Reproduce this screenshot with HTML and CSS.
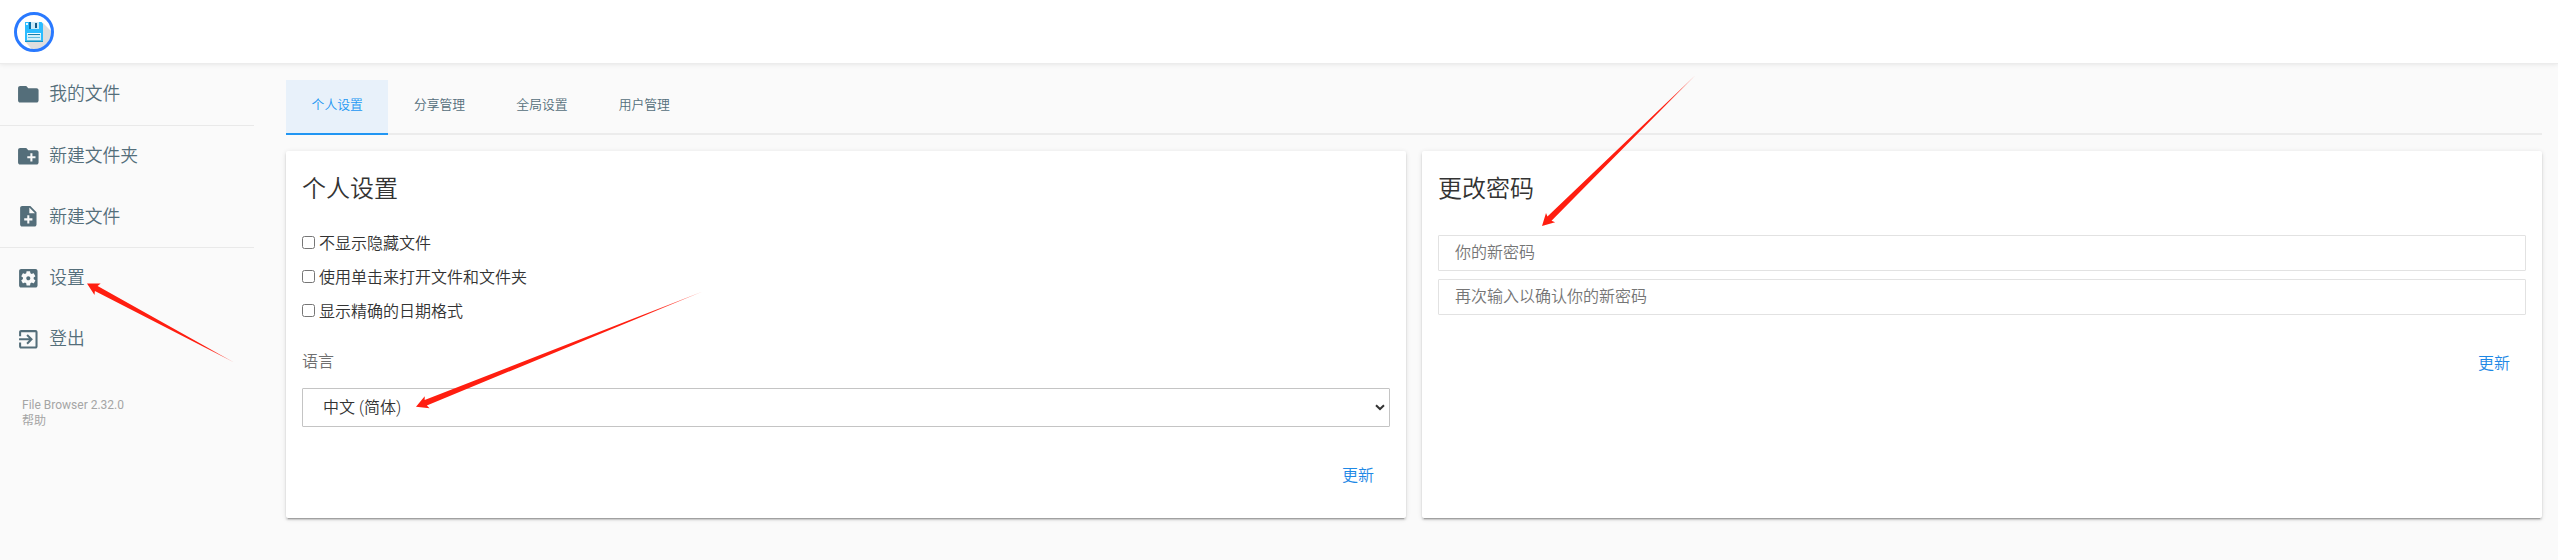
FILE: index.html
```html
<!DOCTYPE html>
<html lang="zh-CN">
<head>
<meta charset="utf-8">
<title>File Browser</title>
<link rel="stylesheet" href="styles.css">
</head>
<body>
<header class="header">
  <svg class="logo" viewBox="0 0 40 40">
    <circle cx="20" cy="20" r="18.5" fill="#fff"/>
    <path d="M29 11l8.500 8.500A18.500 18.500 0 0 1 18 37.500L11.500 30z" fill="#dedede"/>
    <path d="M11 10h16.500l1.500 1.500V30H11z" fill="#2bbcff"/>
    <path d="M12 11h2v2h-2z" fill="#e8f9ff"/>
    <path d="M15 10h10v7H15z" fill="#cbeaf8"/>
    <path d="M15 10h2v7h-2z" fill="#0873ae"/>
    <path d="M21 11h2v5h-2z" fill="#155a86"/>
    <path d="M13 21h14v8H13z" fill="#d3eff9"/>
    <path d="M13 21h14v1H13z" fill="#f3fcff"/>
    <path d="M14 22h12v1H14z" fill="#167fad"/>
    <path d="M14 25h12v1H14zM13 28h14v1H13z" fill="#64bddf"/>
    <path d="M11 29h18v1H11z" fill="#1193c9"/>
    <circle cx="20" cy="20" r="18.500" fill="none" stroke="#2979ff" stroke-width="3"/>
  </svg>
</header>
<div class="layout">
  <nav class="sidebar">
    <div class="group">
      <a class="action"><svg class="icon" viewBox="0 0 24 24"><path d="M10 4H4c-1.100 0-1.990.9-1.990 2L2 18c0 1.100.9 2 2 2h16c1.100 0 2-.9 2-2V8c0-1.100-.9-2-2-2h-8l-2-2z"/></svg><span>我的文件</span></a>
    </div>
    <div class="group">
      <a class="action"><svg class="icon" viewBox="0 0 24 24"><path d="M20 6h-8l-2-2H4c-1.110 0-1.990.89-1.990 2L2 18c0 1.110.89 2 2 2h16c1.110 0 2-.89 2-2V8c0-1.110-.89-2-2-2zm-1 8h-3v3h-2v-3h-3v-2h3V9h2v3h3v2z"/></svg><span>新建文件夹</span></a>
      <a class="action"><svg class="icon" viewBox="0 0 24 24"><path d="M14 2H6c-1.100 0-1.990.9-1.990 2L4 20c0 1.100.89 2 1.990 2H18c1.100 0 2-.9 2-2V8l-6-6zm2 14h-3v3h-2v-3H8v-2h3v-3h2v3h3v2zm-3-7V3.500L18.500 9H13z"/></svg><span>新建文件</span></a>
    </div>
    <div class="group">
      <a class="action"><svg class="icon" viewBox="0 0 24 24"><path d="M12 10c-1.100 0-2 .9-2 2s.9 2 2 2 2-.9 2-2-.9-2-2-2zm7-7H5c-1.110 0-2 .9-2 2v14c0 1.100.89 2 2 2h14c1.110 0 2-.9 2-2V5c0-1.100-.89-2-2-2zm-1.750 9c0 .23-.02.46-.05.68l1.480 1.160c.13.11.17.3.08.45l-1.400 2.420c-.09.15-.27.21-.43.15l-1.740-.7c-.36.28-.76.51-1.180.69l-.26 1.850c-.03.17-.18.3-.35.3h-2.800c-.17 0-.32-.13-.35-.29l-.26-1.850c-.43-.18-.82-.41-1.180-.69l-1.740.7c-.16.06-.34 0-.43-.15l-1.400-2.420c-.09-.15-.05-.34.08-.45l1.480-1.160c-.03-.23-.05-.46-.05-.69 0-.23.02-.46.05-.68l-1.480-1.160c-.13-.11-.17-.3-.08-.45l1.400-2.420c.09-.15.27-.21.43-.15l1.740.7c.36-.28.76-.51 1.180-.69l.26-1.850c.03-.17.18-.3.35-.3h2.800c.17 0 .32.13.35.29l.26 1.850c.43.18.82.41 1.180.69l1.740-.7c.16-.06.34 0 .43.15l1.400 2.420c.09.15.05.34-.08.45l-1.480 1.160c.03.23.05.46.05.69z"/></svg><span>设置</span></a>
      <a class="action"><svg class="icon" viewBox="0 0 24 24"><path d="M10.090 15.590L11.500 17l5-5-5-5-1.410 1.410L12.670 11H3v2h9.670l-2.580 2.590zM19 3H5c-1.110 0-2 .9-2 2v4h2V5h14v14H5v-4H3v4c0 1.100.89 2 2 2h14c1.100 0 2-.9 2-2V5c0-1.100-.9-2-2-2z"/></svg><span>登出</span></a>
    </div>
    <div class="credits"><span>File Browser 2.32.0</span><a>帮助</a></div>
  </nav>
  <main class="main">
    <div class="tabs">
      <a class="tab tab-active">个人设置</a>
      <a class="tab">分享管理</a>
      <a class="tab">全局设置</a>
      <a class="tab">用户管理</a>
    </div>
    <div class="cards">
      <form class="card">
        <h2 class="card-title">个人设置</h2>
        <div class="checks">
          <label class="check"><input class="box" type="checkbox"><span>不显示隐藏文件</span></label>
          <label class="check"><input class="box" type="checkbox"><span>使用单击来打开文件和文件夹</span></label>
          <label class="check"><input class="box" type="checkbox"><span>显示精确的日期格式</span></label>
        </div>
        <h3 class="label">语言</h3>
        <div class="select"><span>中文 (简体)</span><svg class="chevron" viewBox="0 0 10 7"><path d="M1 1.200l4 3.800 4-3.800"/></svg></div>
        <div class="card-action"><a class="button">更新</a></div>
      </form>
      <form class="card">
        <h2 class="card-title">更改密码</h2>
        <div class="fields">
          <input class="input" type="password" placeholder="你的新密码">
          <input class="input" type="password" placeholder="再次输入以确认你的新密码">
        </div>
        <div class="card-action"><a class="button">更新</a></div>
      </form>
    </div>
  </main>
</div>
<svg class="arrows" viewBox="0 0 2558 560">
  <defs>
    <linearGradient id="fade" x1="0" x2="1" y1="0" y2="0">
      <stop offset="0.8" stop-color="#ff1e10"/><stop offset="1" stop-color="#ff1e10" stop-opacity=".6"/>
    </linearGradient>
  </defs>
  <g fill="url(#fade)">
    <path transform="translate(87 283.500) rotate(28.200)" d="M0 0L12-6.500 10.500-2.900 167 0 10.500 2.900 12 6.500z"/>
    <path transform="translate(416 406.700) rotate(-21.900)" d="M0 0L12-6.500 10.500-2.900 309 0 10.500 2.900 12 6.500z"/>
    <path transform="translate(1542 226) rotate(-44.500)" d="M0 0L12-6.500 10.500-2.900 215 0 10.500 2.900 12 6.500z"/>
  </g>
</svg>
</body>
</html>
```
FILE: styles.css
```css
* { box-sizing: border-box; }
body {
  margin: 0;
  height: 560px;
  overflow: hidden;
  background: #fafafa;
  color: #333;
  font: 350 16px/24px Roboto, "Noto Sans CJK SC", sans-serif;
}
.header {
  position: relative;
  display: flex;
  align-items: center;
  height: 64px;
  padding: 0 14px;
  background: #fff;
  border-bottom: 1px solid rgba(0, 0, 0, .075);
  box-shadow: 0 0 5px rgba(0, 0, 0, .1);
}
.logo { width: 40px; height: 40px; margin-top: 1px; }
.layout { display: flex; align-items: flex-start; gap: 32px; padding-right: 16px; }
.sidebar { width: 254px; flex: none; }
.group + .group { border-top: 1px solid #e9e9e9; }
.action {
  display: flex;
  align-items: center;
  gap: 8.500px;
  height: 60.700px;
  padding: 0 16px;
  color: #546e7a;
  font-size: 17.800px;
}
.icon { width: 24.640px; height: 24.640px; fill: #546e7a; }
.credits {
  display: flex;
  flex-direction: column;
  padding: 28px 22px;
  color: #a5a5a5;
  font-size: 12px;
  line-height: 16px;
  font-weight: 400;
}
.main { flex: 1; padding-top: 16px; }
.tabs { display: flex; height: 55px; border-bottom: 2px solid #ececec; }
.tab {
  height: 55px;
  padding: 0 25.600px;
  color: #546e7a;
  font-size: 12.800px;
  line-height: 50px;
}
.tab-active { color: #2196f3; background: #e8f1fa; border-bottom: 2px solid #2196f3; }
.cards { display: grid; grid-template-columns: 1fr 1fr; gap: 16px; margin-top: 16px; }
.card {
  height: 367px;
  padding: 16px;
  background: #fff;
  border-radius: 2px;
  box-shadow: 0 2px 2px 0 rgba(0, 0, 0, .14), 0 1px 5px 0 rgba(0, 0, 0, .12), 0 3px 1px -2px rgba(0, 0, 0, .2);
}
.card-title { margin: 0; padding-top: 1px; font-size: 24px; line-height: 43px; font-weight: 350; }
.checks { margin-top: 15px; }
.check { display: flex; align-items: center; gap: 4px; height: 34px; }
.check span { padding-top: 1px; }
.box { width: 13px; height: 13px; margin: 0; position: relative; top: -1px; }
.label { margin: 22px 0 0; color: #6f6f6f; font-size: 16px; line-height: 24px; font-weight: 350; }
.select {
  display: flex;
  align-items: center;
  justify-content: space-between;
  height: 39px;
  margin-top: 14px;
  padding: 0 4px 0 20px;
  border: 1px solid #c4c4c4;
  border-radius: 1px;
}
.chevron { width: 10px; height: 7px; fill: none; stroke: #333; stroke-width: 2; }
.fields { display: grid; gap: 8px; margin-top: 24px; }
.input {
  width: 100%;
  height: 36px;
  padding: 0 16px 1px;
  border: 1px solid #e2e2e2;
  border-radius: 1px;
  background: #fff;
  font: inherit;
}
.input::placeholder { color: #757575; }
.card-action { display: flex; justify-content: flex-end; padding: 37px 16px 0; }
.button { color: #1e88e5; }
.arrows { position: absolute; left: 0; top: 0; width: 2558px; height: 560px; pointer-events: none; }
```
